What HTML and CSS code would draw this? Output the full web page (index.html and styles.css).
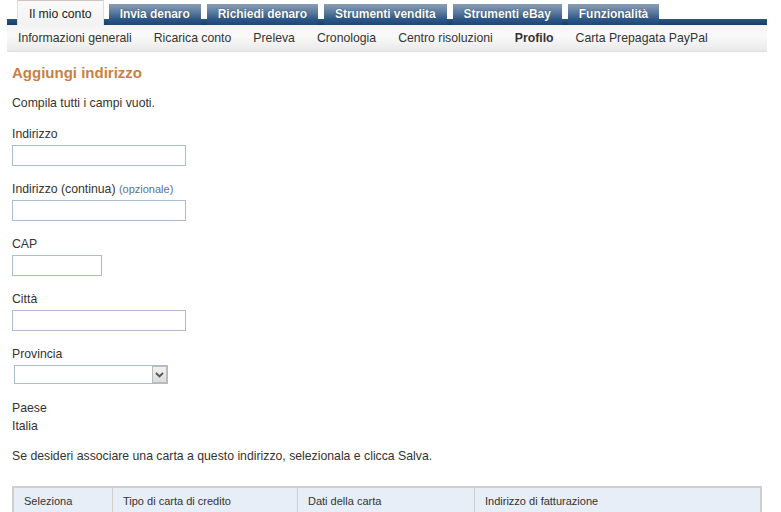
FILE: index.html
```html
<!DOCTYPE html>
<html lang="it">
<head>
<meta charset="utf-8">
<title>Aggiungi indirizzo</title>
<link rel="stylesheet" href="styles.css">
</head>
<body>
<div class="header">
  <div class="tabs">
    <div class="tab active">Il mio conto</div>
    <div class="tab">Invia denaro</div>
    <div class="tab">Richiedi denaro</div>
    <div class="tab">Strumenti vendita</div>
    <div class="tab">Strumenti eBay</div>
    <div class="tab">Funzionalità</div>
  </div>
  <div class="subnav">
    <span>Informazioni generali</span>
    <span>Ricarica conto</span>
    <span>Preleva</span>
    <span>Cronologia</span>
    <span>Centro risoluzioni</span>
    <span class="current">Profilo</span>
    <span>Carta Prepagata PayPal</span>
  </div>
</div>
<div class="content">
  <h1 class="title">Aggiungi indirizzo</h1>
  <p class="intro">Compila tutti i campi vuoti.</p>
  <div class="field">
    <label class="lbl">Indirizzo</label>
    <input class="inp wide" type="text">
  </div>
  <div class="field">
    <label class="lbl">Indirizzo (continua) <span class="opt">(opzionale)</span></label>
    <input class="inp wide" type="text">
  </div>
  <div class="field">
    <label class="lbl">CAP</label>
    <input class="inp short" type="text">
  </div>
  <div class="field">
    <label class="lbl">Città</label>
    <input class="inp wide" type="text">
  </div>
  <div class="field">
    <label class="lbl">Provincia</label>
    <div class="selwrap">
      <select class="sel"><option></option></select>
      <span class="selbtn"><svg width="9" height="6" viewBox="0 0 9 6"><path d="M1 1 L4.5 4.5 L8 1" fill="none" stroke="#555" stroke-width="1.8"/></svg></span>
    </div>
  </div>
  <div class="country">
    <div>Paese</div>
    <div>Italia</div>
  </div>
  <p class="note">Se desideri associare una carta a questo indirizzo, selezionala e clicca Salva.</p>
  <table class="cards">
    <tr>
      <th class="c1">Seleziona</th>
      <th class="c2">Tipo di carta di credito</th>
      <th class="c3">Dati della carta</th>
      <th class="c4">Indirizzo di fatturazione</th>
    </tr>
  </table>
</div>
</body>
</html>
```
FILE: styles.css
```css
html, body {
  margin: 0;
  padding: 0;
  background: #fff;
}
body {
  font-family: "Liberation Sans", Arial, sans-serif;
  color: #333;
  font-size: 12.25px;
}
.header {
  margin-left: 7px;
  width: 760px;
}
.tabs {
  display: flex;
  align-items: flex-end;
  gap: 6px;
  padding-left: 10px;
  height: 25px;
  background: linear-gradient(to bottom, #fff 0, #fff 19px, #2a5584 19px, #173d69 25px);
}
.tab {
  height: 21px;
  line-height: 21px;
  padding: 0 11px;
  font-size: 12px;
  font-weight: bold;
  color: #fff;
  text-shadow: 0 0 1px #0d2a4d;
  background: linear-gradient(to bottom, #8a9fb5 0, #5b7a9c 40%, #2b5586 75%, #1e4775 100%);
  letter-spacing: -0.05px;
}
.tab.active {
  height: 24px;
  line-height: 26px;
  padding: 0 11px;
  margin-right: -1px;
  font-weight: normal;
  font-size: 12.25px;
  color: #222;
  text-shadow: none;
  background: linear-gradient(to bottom, #fafafa, #f2f2f2);
  border-top: 1px solid #cfc5c2;
  border-left: 1px solid #ddd;
  border-right: 1px solid #ddd;
  letter-spacing: 0;
}
.subnav {
  display: flex;
  gap: 22px;
  padding-left: 11px;
  height: 26px;
  line-height: 27px;
  font-size: 12.25px;
  color: #333;
  background: linear-gradient(to bottom, #f3f3f3 0, #fafafa 40%, #e9e9e9 100%);
  border-bottom: 1px solid #d7e1ec;
}
.subnav .current {
  font-weight: bold;
}
.content {
  padding-left: 12px;
}
.title {
  margin: 12px 0 0;
  font-size: 15px;
  line-height: 18px;
  font-weight: bold;
  color: #c98143;
}
.intro {
  margin: 14px 0 0;
  line-height: 15px;
}
.field {
  margin-top: 15px;
}
.field + .field {
  margin-top: 15px;
}
.lbl {
  display: block;
  line-height: 17px;
  margin-bottom: 2px;
}
.opt {
  font-size: 11px;
  color: #5c7193;
}
.inp {
  display: block;
  box-sizing: border-box;
  height: 21px;
  margin: 0;
  border: 1px solid #a9bcd3;
  padding: 2px 4px;
  background: #fff;
}
.wide { width: 174px; }
.short { width: 90px; }
.selwrap {
  position: relative;
  width: 154px;
  height: 19px;
  margin-left: 2px;
}
.sel {
  display: block;
  box-sizing: border-box;
  width: 154px;
  height: 19px;
  margin: 0;
  border: 1px solid #a9bcd3;
  background: #fff;
  appearance: none;
  -webkit-appearance: none;
}
.selbtn {
  position: absolute;
  right: 1px;
  top: 1px;
  width: 15px;
  height: 17px;
  box-sizing: border-box;
  border: 1px solid #bbb;
  background: linear-gradient(to bottom, #f0f0f0, #dcdcdc);
  display: flex;
  align-items: center;
  justify-content: center;
}
.country {
  margin-top: 15px;
  line-height: 18px;
}
.note {
  margin: 14px 0 0;
  line-height: 15px;
}
.cards {
  margin-top: 22px;
  width: 750px;
  border-collapse: separate;
  border-spacing: 0;
  border: 2px solid #cfcfcf;
  border-bottom: none;
}
.cards th {
  text-align: left;
  font-weight: normal;
  font-size: 11px;
  color: #333;
  background: #e7eef8;
  height: 26px;
  padding: 0 0 0 10px;
  border-left: 1px solid #cfcfcf;
}
.cards th.c1 { border-left: none; width: 88px; }
.cards th.c2 { width: 174px; }
.cards th.c3 { width: 166px; }
```
